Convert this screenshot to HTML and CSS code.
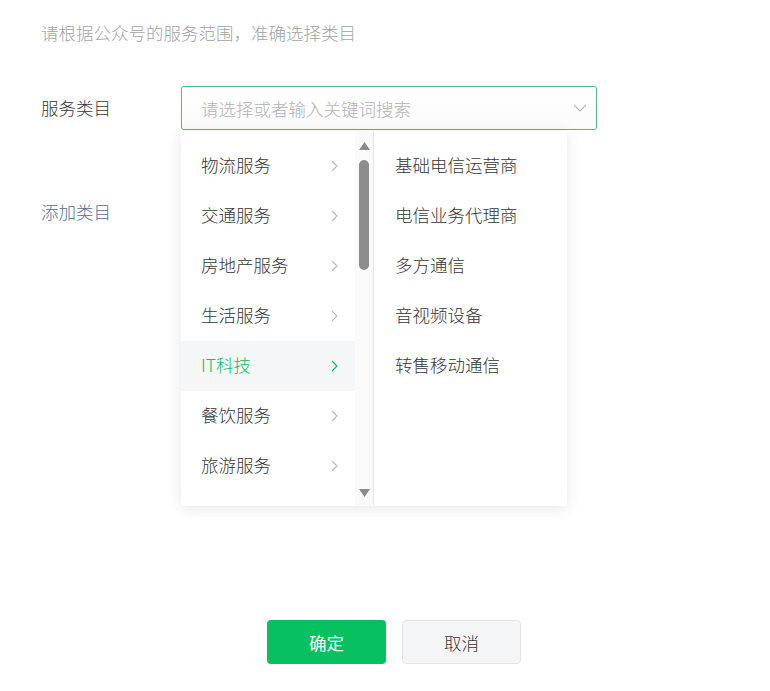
FILE: index.html
```html
<!DOCTYPE html>
<html lang="zh-CN">
<head>
<meta charset="utf-8">
<link rel="stylesheet" href="styles.css">
</head>
<body>
<div class="page">
  <p class="hint">请根据公众号的服务范围，准确选择类目</p>
  <div class="form-row">
    <div class="label">服务类目</div>
    <div class="select">
      <div class="input">
        <span class="placeholder">请选择或者输入关键词搜索</span>
        <svg class="caret" width="14" height="8" viewBox="0 0 14 8"><polyline points="1,1 7,7 13,1" fill="none" stroke="#b4b4b4" stroke-width="1.1"/></svg>
      </div>
      <div class="dropdown">
        <div class="col-left">
          <ul class="list">
            <li class="item"><span>物流服务</span><svg class="chev" width="7" height="12" viewBox="0 0 7 12"><polyline points="1,1 6,6 1,11" fill="none" stroke="#b8b8b8" stroke-width="1.1"/></svg></li>
            <li class="item"><span>交通服务</span><svg class="chev" width="7" height="12" viewBox="0 0 7 12"><polyline points="1,1 6,6 1,11" fill="none" stroke="#b8b8b8" stroke-width="1.1"/></svg></li>
            <li class="item"><span>房地产服务</span><svg class="chev" width="7" height="12" viewBox="0 0 7 12"><polyline points="1,1 6,6 1,11" fill="none" stroke="#b8b8b8" stroke-width="1.1"/></svg></li>
            <li class="item"><span>生活服务</span><svg class="chev" width="7" height="12" viewBox="0 0 7 12"><polyline points="1,1 6,6 1,11" fill="none" stroke="#b8b8b8" stroke-width="1.1"/></svg></li>
            <li class="item active"><span>IT科技</span><svg class="chev" width="7" height="12" viewBox="0 0 7 12"><polyline points="1,1 6,6 1,11" fill="none" stroke="#07c160" stroke-width="1.2"/></svg></li>
            <li class="item"><span>餐饮服务</span><svg class="chev" width="7" height="12" viewBox="0 0 7 12"><polyline points="1,1 6,6 1,11" fill="none" stroke="#b8b8b8" stroke-width="1.1"/></svg></li>
            <li class="item"><span>旅游服务</span><svg class="chev" width="7" height="12" viewBox="0 0 7 12"><polyline points="1,1 6,6 1,11" fill="none" stroke="#b8b8b8" stroke-width="1.1"/></svg></li>
          </ul>
          <div class="scrollbar">
            <svg class="arrow" width="11" height="8" viewBox="0 0 11 8"><polygon points="0,8 5.5,0 11,8" fill="#8a8a8a"/></svg>
            <div class="track"><div class="thumb"></div></div>
            <svg class="arrow" width="11" height="8" viewBox="0 0 11 8"><polygon points="0,0 11,0 5.5,8" fill="#8a8a8a"/></svg>
          </div>
        </div>
        <ul class="col-right">
          <li class="sub">基础电信运营商</li>
          <li class="sub">电信业务代理商</li>
          <li class="sub">多方通信</li>
          <li class="sub">音视频设备</li>
          <li class="sub">转售移动通信</li>
        </ul>
      </div>
    </div>
  </div>
  <div class="add-row"><a class="add-link">添加类目</a></div>
  <div class="actions">
    <button class="btn btn-primary">确定</button>
    <button class="btn btn-default">取消</button>
  </div>
</div>
</body>
</html>
```

FILE: styles.css
```css
* { box-sizing: border-box; }
html, body {
  margin: 0;
  padding: 0;
  background: #ffffff;
}
body {
  font-family: "Noto Sans CJK SC", "Noto Sans", sans-serif;
  font-size: 17.5px;
  font-weight: 300;
  color: #353535;
}
.page {
  width: 770px;
  height: 691px;
  padding: 21px 23px 0 41px;
  display: flex;
  flex-direction: column;
}
.hint {
  margin: 0;
  height: 24px;
  line-height: 24px;
  color: #a3a3a3;
}
.form-row {
  margin-top: 41px;
  display: flex;
  align-items: center;
  height: 44px;
}
.label {
  width: 140px;
  line-height: 44px;
  color: #353535;
}
.select {
  position: relative;
  width: 416px;
}
.input {
  height: 44px;
  border: 1px solid #4fba83;
  border-radius: 3px;
  display: flex;
  align-items: center;
  justify-content: space-between;
  padding: 0 9px 0 19px;
  background: linear-gradient(#ffffff, #fbfbfb);
}
.placeholder {
  color: #b2b2b2;
}
.caret {
  display: block;
}
.dropdown {
  position: absolute;
  left: 0;
  top: 45px;
  width: 386px;
  height: 375px;
  background: #ffffff;
  box-shadow: 0 2px 14px rgba(0, 0, 0, 0.1);
  display: flex;
  z-index: 10;
}
.col-left {
  width: 193px;
  display: flex;
  border-right: 1px solid #e7e7e7;
}
.list {
  list-style: none;
  margin: 0;
  padding: 10px 0 0 0;
  width: 174px;
}
.item {
  height: 50px;
  display: flex;
  align-items: center;
  justify-content: space-between;
  padding: 0 17px 3px 20px;
  color: #353535;
}
.item.active {
  background: #f5f6f7;
  color: #07c160;
}
.chev {
  display: block;
  margin-top: 3px;
}
.scrollbar {
  width: 18px;
  background: #fafafa;
  display: flex;
  flex-direction: column;
  align-items: center;
  padding: 11px 0 9px 0;
}
.arrow {
  display: block;
}
.track {
  flex: 1;
  width: 100%;
  display: flex;
  justify-content: center;
  padding-top: 10px;
}
.thumb {
  width: 10px;
  height: 110px;
  border-radius: 5px;
  background: #8c8c8c;
}
.col-right {
  list-style: none;
  margin: 0;
  padding: 9px 0 0 21px;
  flex: 1;
}
.sub {
  height: 50px;
  line-height: 50px;
  color: #353535;
}
.add-row {
  margin-top: 67px;
  height: 30px;
  line-height: 30px;
}
.add-link {
  color: #576b95;
}
.actions {
  margin-top: 393px;
  display: flex;
  justify-content: center;
  gap: 16px;
}
.btn {
  width: 119px;
  height: 44px;
  border-radius: 4px;
  font-family: "Noto Sans CJK SC", "Noto Sans", sans-serif;
  font-size: 17.5px;
  cursor: pointer;
}
.btn-primary {
  background: #07c160;
  color: #ffffff;
  border: none;
  font-weight: 400;
}
.btn-default {
  background: #f4f5f7;
  color: #353535;
  border: 1px solid #e3e4e6;
  font-weight: 300;
}
```
